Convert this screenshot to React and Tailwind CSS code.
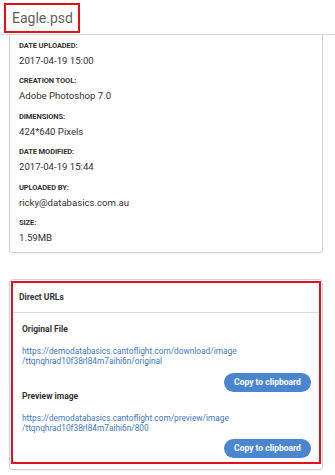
export default function App() {
  const fields = [
    ["DATE UPLOADED:", "2017-04-19 15:00"],
    ["CREATION TOOL:", "Adobe Photoshop 7.0"],
    ["DIMENSIONS:", "424*640 Pixels"],
    ["DATE MODIFIED:", "2017-04-19 15:44"],
    ["UPLOADED BY:", "ricky@databasics.com.au"],
    ["SIZE:", "1.59MB"],
  ];
  const urls = [
    {
      title: "Original File",
      l1: "https://demodatabasics.cantoflight.com/download/image",
      l2: "/ttqnqhrad10f38rl84m7aihi6n/original",
    },
    {
      title: "Preview image",
      l1: "https://demodatabasics.cantoflight.com/preview/image",
      l2: "/ttqnqhrad10f38rl84m7aihi6n/800",
    },
  ];
  return (
    <div className="w-[335px] h-[475px] bg-white overflow-hidden font-['Roboto','Liberation_Sans',sans-serif] text-[#333]">
      <div className="pt-[3px] pl-[4px] pb-px border-b border-[#d6d6d6]">
        <div className="flex items-center w-[76px] h-[30px] border-2 border-[#e3101d] pl-[6px] text-[14px] leading-[26px] text-[#5f5f5f]">
          Eagle.psd
        </div>
      </div>
      <div className="ml-[9px] w-[314px] border-x border-b border-[#d2d2d2] rounded-b-[4px] pt-[5.5px] pb-[8px] pl-[9px] shadow-[0_1px_2px_rgba(0,0,0,0.06)]">
        {fields.map(([label, value], i) => (
          <div key={label} className={i < fields.length - 1 ? "mb-[9.5px]" : ""}>
            <div className="text-[7.5px] leading-[10px] font-bold text-[#333] tracking-[-0.1px]">{label}</div>
            <div className="mt-[4px] text-[9.6px] leading-[12px] text-[#333]">{value}</div>
          </div>
        ))}
      </div>
      <div className="ml-[9px] mt-[26px] w-[314px] border border-[#d2d2d2] rounded-[4px] p-px pb-[5px] shadow-[0_1px_2px_rgba(0,0,0,0.06)]">
        <div className="border-2 border-[#e3101d]">
          <div className="h-[30px] flex items-center pl-[6px] border-b border-[#dcdcdc] text-[8.5px] font-bold text-[#333]">
            Direct URLs
          </div>
          <div className="pt-[11px] pl-[9px] pr-[8px] pb-[4px]">
            {urls.map((u, i) => (
              <div key={u.title} className={i > 0 ? "-mt-px" : ""}>
                <div className="text-[8.5px] leading-[10px] font-bold text-[#333]">{u.title}</div>
                <div className="mt-[12px] text-[8.3px] leading-[10px] text-[#3f78c0] whitespace-nowrap">
                  {u.l1}
                  <br />
                  {u.l2}
                </div>
                <div className="flex justify-end mt-[6.5px]">
                  <button className="w-[87px] h-[19px] rounded-full bg-[#4a86cf] text-white text-[8.5px] font-bold leading-[19px]">
                    Copy to clipboard
                  </button>
                </div>
              </div>
            ))}
          </div>
        </div>
      </div>
    </div>
  );
}
